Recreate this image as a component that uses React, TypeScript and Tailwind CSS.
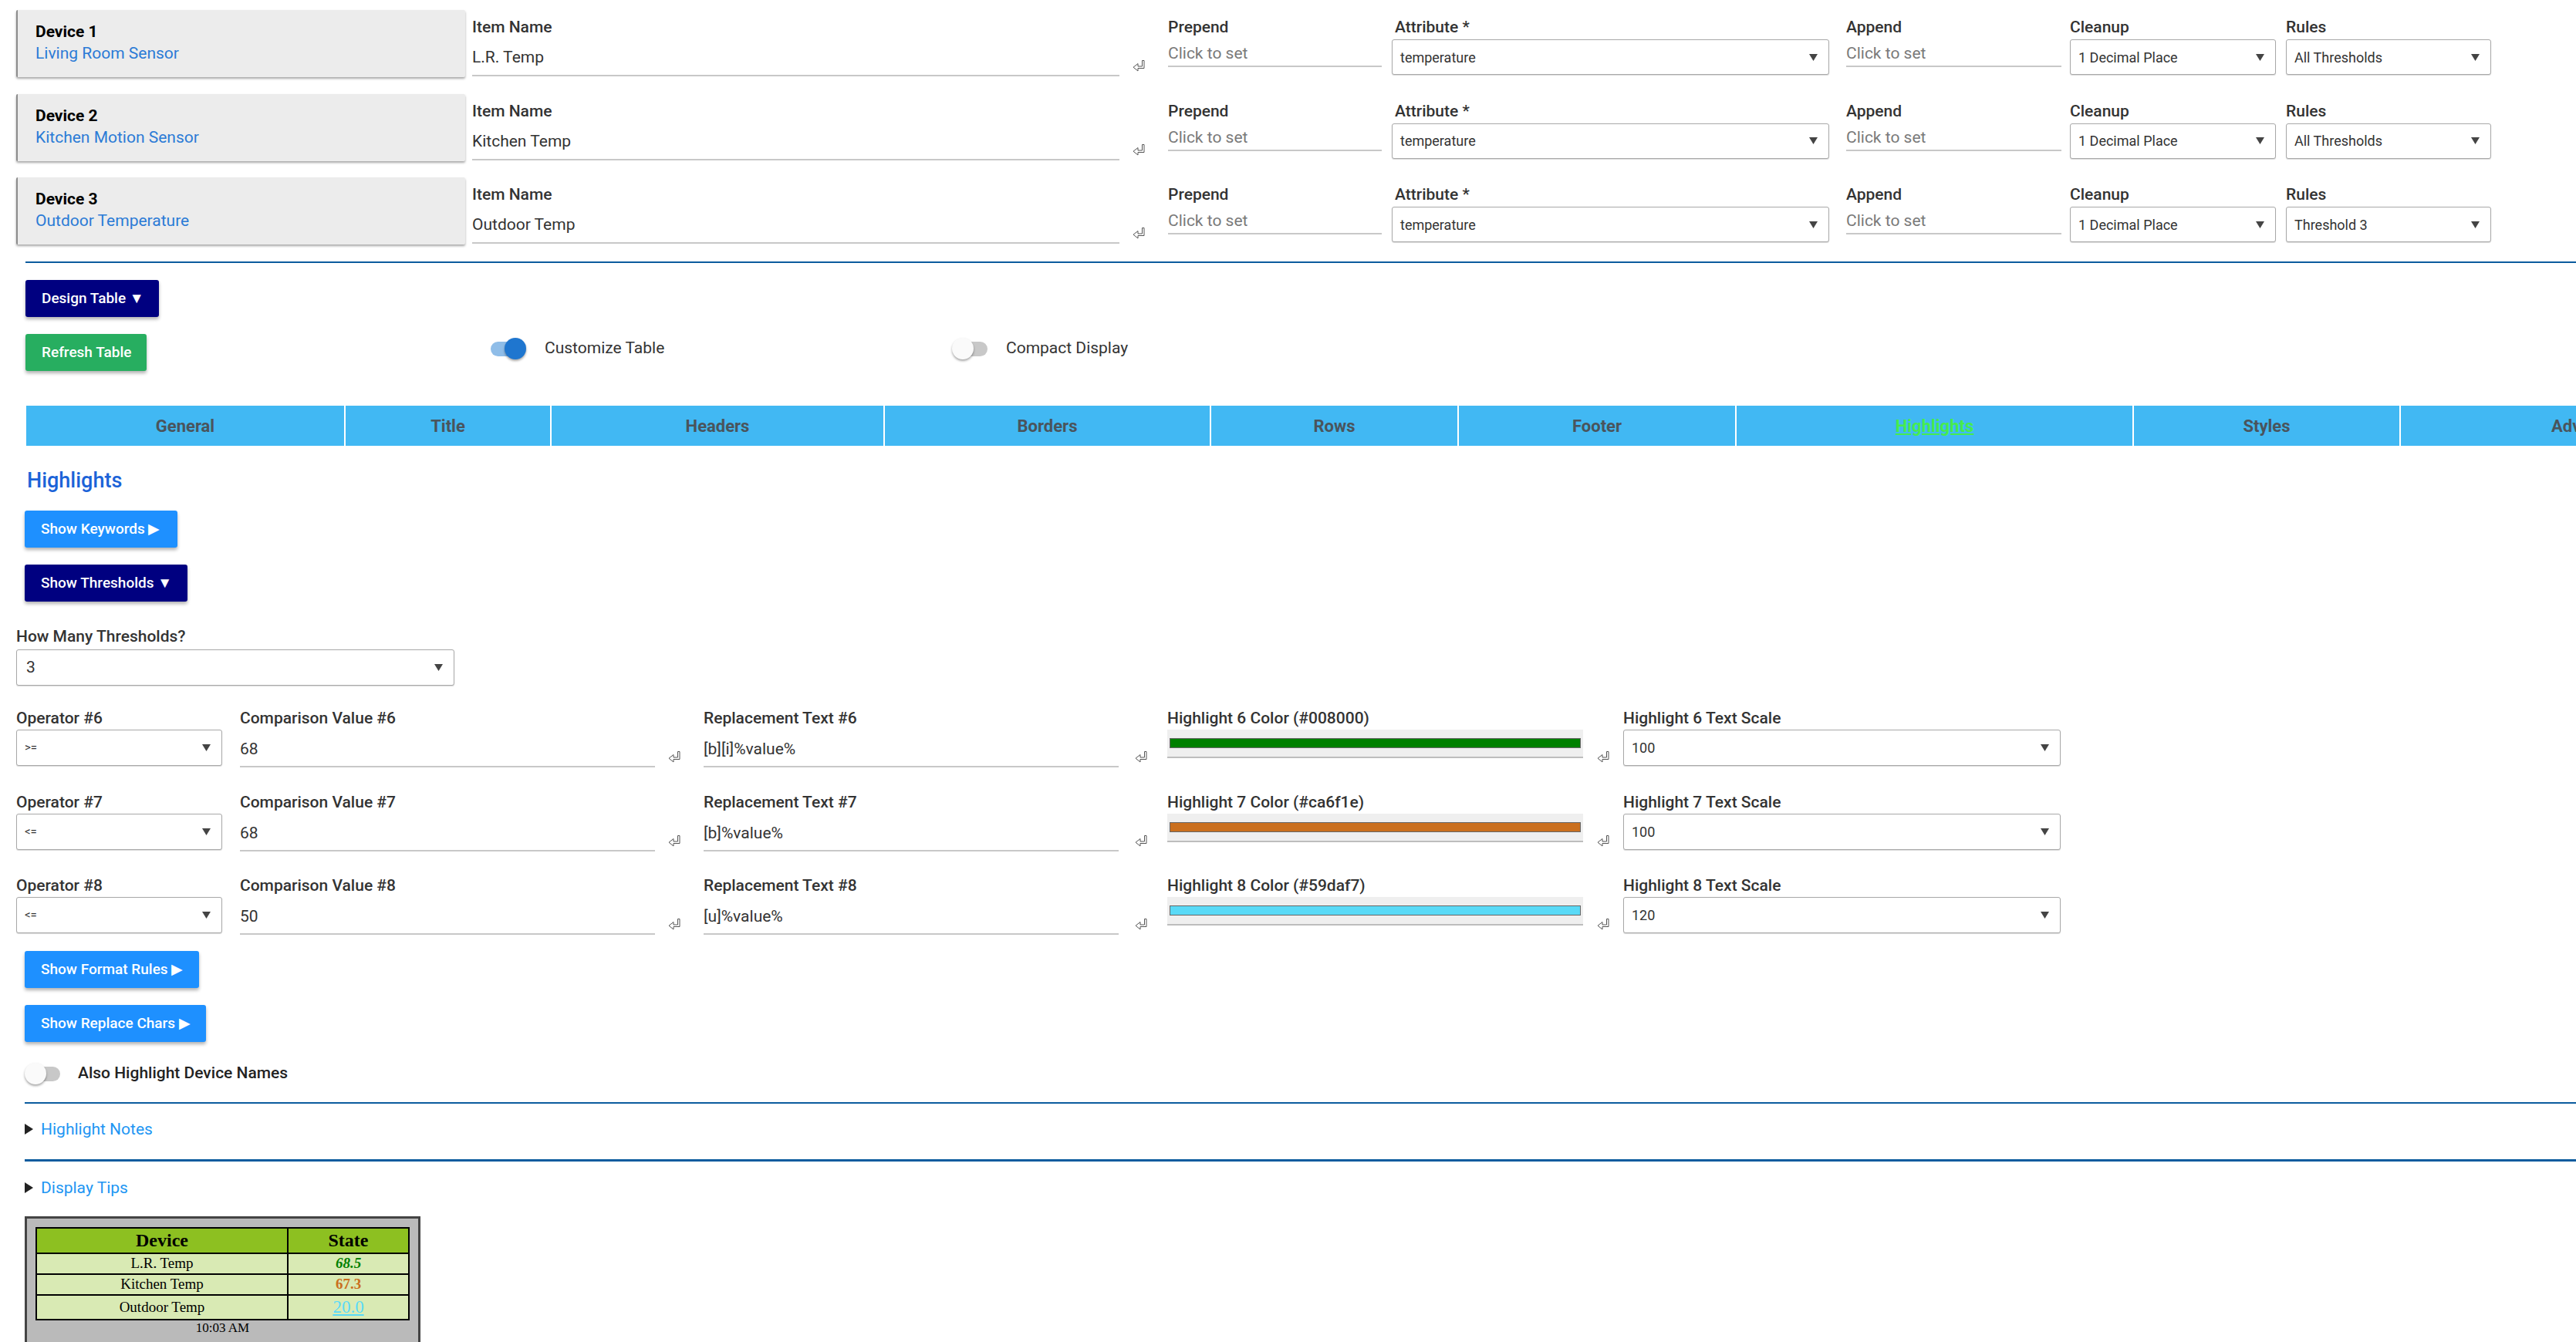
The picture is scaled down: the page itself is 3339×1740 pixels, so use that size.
import React from 'react'

interface Device {
  n: number
  name: string
  item: string
  rules: string
}

interface Threshold {
  n: number
  op: string
  val: string
  rep: string
  color: string
  scale: string
}

const DEVICES: Device[] = [
  { n: 1, name: 'Living Room Sensor', item: 'L.R. Temp', rules: 'All Thresholds' },
  { n: 2, name: 'Kitchen Motion Sensor', item: 'Kitchen Temp', rules: 'All Thresholds' },
  { n: 3, name: 'Outdoor Temperature', item: 'Outdoor Temp', rules: 'Threshold 3' },
]

const THRESHOLDS: Threshold[] = [
  { n: 6, op: '>=', val: '68', rep: '[b][i]%value%', color: '#008000', scale: '100' },
  { n: 7, op: '<=', val: '68', rep: '[b]%value%', color: '#ca6f1e', scale: '100' },
  { n: 8, op: '<=', val: '50', rep: '[u]%value%', color: '#59daf7', scale: '120' },
]

// widths include the 2px white divider on the right
const TABS = [
  { label: 'General', w: 'w-[414px]' },
  { label: 'Title', w: 'w-[267px]' },
  { label: 'Headers', w: 'w-[432px]' },
  { label: 'Borders', w: 'w-[423px]' },
  { label: 'Rows', w: 'w-[321px]' },
  { label: 'Footer', w: 'w-[360px]' },
  { label: 'Highlights', w: 'w-[515px]', active: true },
  { label: 'Styles', w: 'w-[346px]' },
  { label: 'Advanced', w: 'w-[490px]' },
]

function RetIcon({ className = '' }: { className?: string }) {
  return (
    <svg width="16" height="15" viewBox="0 0 16 15" className={`shrink-0 ${className}`}>
      <path d="M12.5 0.5 H15 V10.5 H7 V14 L1 9.2 L7 4.5 V8 H12.5 Z" fill="white" stroke="#555" strokeWidth="1" />
    </svg>
  )
}

function Caret() {
  return (
    <svg width="11" height="9" viewBox="0 0 11 9" className="shrink-0">
      <path d="M0 0 H11 L5.5 9 Z" fill="#444" />
    </svg>
  )
}

function Label({ children, className = '' }: { children: React.ReactNode; className?: string }) {
  return (
    <div className={`h-[25px] whitespace-nowrap text-[21px] font-medium leading-[25px] text-[#333] ${className}`}>
      {children}
    </div>
  )
}

function Select({ value, className = '', text = 'text-[18px]' }: { value: string; className?: string; text?: string }) {
  return (
    <div className={`flex items-center justify-between rounded-[3px] border border-[#a8a8a8] bg-white pl-[10px] pr-[14px] shadow-[0_1px_1px_rgba(0,0,0,0.15)] ${className}`}>
      <span className={`${text} whitespace-nowrap text-[#333]`}>{value}</span>
      <Caret />
    </div>
  )
}

function Btn({ children, className = '' }: { children: React.ReactNode; className?: string }) {
  return (
    <div className={`flex h-[48px] items-center self-start rounded-[3px] pl-[21px] text-[19px] font-medium whitespace-nowrap text-white shadow-[0_3px_4px_rgba(0,0,0,0.3)] ${className}`}>
      {children}
    </div>
  )
}

function Toggle({ on }: { on?: boolean }) {
  return (
    <div className="relative h-[28px] w-[48px] shrink-0">
      <div className={`absolute left-[2px] right-[2px] top-[5px] h-[19px] rounded-full ${on ? 'bg-[#8fbde8]' : 'bg-[#c8c8c8]'}`} />
      <div
        className={`absolute top-0 h-[28px] w-[28px] rounded-full shadow-[0_2px_3px_rgba(0,0,0,0.35)] ${on ? 'right-0 bg-[#1f76cf]' : 'left-0 bg-[#fafafa]'}`}
      />
    </div>
  )
}

function Disclosure({ children }: { children: React.ReactNode }) {
  return (
    <div className="ml-[11px] flex h-[25px] items-center gap-[10px]">
      <svg width="11" height="14" viewBox="0 0 11 14">
        <path d="M0 0 L11 7 L0 14 Z" fill="#222" />
      </svg>
      <span className="text-[21px] leading-[25px] text-[#2196f3]">{children}</span>
    </div>
  )
}

function DeviceRow({ d }: { d: Device }) {
  return (
    <div className="flex h-[108.5px] items-start">
      {/* device card */}
      <div className="h-[87px] w-[582px] shrink-0 rounded-[2px] border-l-2 border-[#8c8c8c] bg-[#ececec] pl-[23px] pt-[14px] shadow-[0_2px_3px_rgba(0,0,0,0.35)]">
        <div className="text-[21px] font-bold leading-[28px] text-black">Device {d.n}</div>
        <div className="text-[21px] leading-[28px] text-[#2b7bd6]">{d.name}</div>
      </div>

      <div className="ml-[9px] w-[839px] shrink-0 pt-[10px]">
        <Label>Item Name</Label>
        <div className="h-[51px] border-b-2 border-[#c8c8c8] pt-[14px] text-[21px] leading-[25px] text-[#333]">{d.item}</div>
      </div>
      <RetIcon className="ml-[17px] mt-[65px]" />

      <div className="ml-[30px] w-[277px] shrink-0 pt-[10px]">
        <Label>Prepend</Label>
        <div className="h-[39px] border-b-2 border-[#c8c8c8] pt-[9px] text-[21px] leading-[25px] text-[#7a7a7a]">Click to set</div>
      </div>

      <div className="ml-[13px] w-[567px] shrink-0 pt-[10px]">
        <Label className="pl-[4px]">Attribute *</Label>
        <Select value="temperature" className="mt-[3px] h-[46px]" />
      </div>

      <div className="ml-[22px] w-[279px] shrink-0 pt-[10px]">
        <Label>Append</Label>
        <div className="h-[39px] border-b-2 border-[#c8c8c8] pt-[9px] text-[21px] leading-[25px] text-[#7a7a7a]">Click to set</div>
      </div>

      <div className="ml-[11px] w-[267px] shrink-0 pt-[10px]">
        <Label>Cleanup</Label>
        <Select value="1 Decimal Place" className="mt-[3px] h-[46px]" />
      </div>

      <div className="ml-[13px] w-[266px] shrink-0 pt-[10px]">
        <Label>Rules</Label>
        <Select value={d.rules} className="mt-[3px] h-[46px]" />
      </div>
    </div>
  )
}

function ThresholdRow({ t }: { t: Threshold }) {
  return (
    <div className="flex items-start">
      <div className="w-[267px] shrink-0">
        <Label>Operator #{t.n}</Label>
        <Select value={t.op} text="text-[15px]" className="mt-[2px] h-[47px]" />
      </div>

      <div className="ml-[23px] w-[538px] shrink-0">
        <Label>Comparison Value #{t.n}</Label>
        <div className="h-[51px] border-b-2 border-[#c8c8c8] pt-[15px] text-[21px] leading-[25px] text-[#333]">{t.val}</div>
      </div>
      <RetIcon className="ml-[17px] mt-[55px]" />

      <div className="ml-[30px] w-[538px] shrink-0">
        <Label>Replacement Text #{t.n}</Label>
        <div className="h-[51px] border-b-2 border-[#c8c8c8] pt-[15px] text-[21px] leading-[25px] text-[#333]">{t.rep}</div>
      </div>
      <RetIcon className="ml-[21px] mt-[55px]" />

      <div className="ml-[26px] w-[539px] shrink-0">
        <Label>
          Highlight {t.n} Color ({t.color})
        </Label>
        <div className="mt-[2px] h-[37px] border-b-2 border-[#bdbdbd] bg-[#efefef] px-[3px] pt-[11px]">
          <div className="h-[13px] border border-[#666]" style={{ backgroundColor: t.color }} />
        </div>
      </div>
      <RetIcon className="ml-[18px] mt-[55px]" />

      <div className="ml-[18px] w-[567px] shrink-0">
        <Label>Highlight {t.n} Text Scale</Label>
        <Select value={t.scale} className="mt-[2px] h-[47px]" />
      </div>
    </div>
  )
}

export default function App() {
  return (
    <div className="h-screen w-full overflow-hidden bg-white pl-[21px] pt-[13px] font-[Roboto,sans-serif] text-[#333]">
      {/* device rows */}
      {DEVICES.map(d => (
        <DeviceRow key={d.n} d={d} />
      ))}

      <div className="ml-[12px] mt-[0.5px] h-[2px] bg-[#0b5c9e]" />

      <div className="flex flex-col">
        <Btn className="ml-[12px] mt-[22px] w-[173px] bg-[#000080]">Design Table ▼</Btn>

        <div className="ml-[12px] mt-[22px] flex items-start">
          <Btn className="w-[157px] bg-[#27ae60]">Refresh Table</Btn>
          <div className="ml-[444px] mt-[3px] flex w-[600px] items-center gap-[24px]">
            <Toggle on />
            <span className="text-[21px] text-[#333]">Customize Table</span>
          </div>
          <div className="mt-[3px] flex items-center gap-[22px]">
            <Toggle />
            <span className="text-[21px] text-[#333]">Compact Display</span>
          </div>
        </div>
      </div>

      {/* tab bar */}
      <div className="ml-[13px] mt-[45px] flex h-[52px]">
        {TABS.map(t => (
          <div
            key={t.label}
            className={`flex h-full shrink-0 items-center justify-center border-r-2 border-white bg-[#41b8f3] text-[22px] font-bold ${t.w} ${t.active ? 'text-[#46ec4e] underline' : 'text-[#4a545c]'}`}
          >
            {t.label}
          </div>
        ))}
      </div>

      <div className="flex flex-col">
        <div className="ml-[14px] mt-[29px] text-[27px] font-medium leading-[32px] text-[#1b63d8]">Highlights</div>

        <Btn className="ml-[11px] mt-[23px] w-[198px] bg-[#1e90ff]">Show Keywords ▶</Btn>
        <Btn className="ml-[11px] mt-[22px] w-[211px] bg-[#000080]">Show Thresholds ▼</Btn>

        <Label className="mt-[33px]">How Many Thresholds?</Label>
        <Select value="3" text="text-[21px]" className="mt-[4px] h-[47px] w-[568px] pl-[12px]" />

        <div className="mt-[30px] flex flex-col gap-[32.5px]">
          {THRESHOLDS.map(t => (
            <ThresholdRow key={t.n} t={t} />
          ))}
        </div>

        <Btn className="ml-[11px] mt-[21px] w-[226px] bg-[#1e90ff]">Show Format Rules ▶</Btn>
        <Btn className="ml-[11px] mt-[22px] w-[235px] bg-[#1e90ff]">Show Replace Chars ▶</Btn>

        <div className="ml-[11px] mt-[25px] flex items-center gap-[21px]">
          <Toggle />
          <span className="text-[21px] font-medium text-[#222]">Also Highlight Device Names</span>
        </div>

        <div className="ml-[11px] mt-[21px] h-[2px] bg-[#0b5c9e]" />
        <div className="mt-[21px]">
          <Disclosure>Highlight Notes</Disclosure>
        </div>
        <div className="ml-[11px] mt-[26px] h-[3px] bg-[#0b5c9e]" />
        <div className="mt-[22px]">
          <Disclosure>Display Tips</Disclosure>
        </div>

        {/* table preview */}
        <div className="ml-[11px] mt-[24px] w-[513px] border-[3px] border-[#444] bg-[#bababa] px-[11px] pb-[30px] pt-[11px] font-['Liberation_Serif',serif] text-black">
          <table className="w-full border-collapse border-2 border-black text-center">
            <thead>
              <tr className="h-[33px] bg-[#8dc021]">
                <th className="w-[326px] border-2 border-black text-[24px] font-bold leading-[28px]">Device</th>
                <th className="border-2 border-black text-[24px] font-bold leading-[28px]">State</th>
              </tr>
            </thead>
            <tbody className="bg-[#d9eab4] text-[19px]">
              <tr className="h-[27px]">
                <td className="border-2 border-black leading-[22px]">L.R. Temp</td>
                <td className="border-2 border-black font-bold italic leading-[22px] text-[#008000]">68.5</td>
              </tr>
              <tr className="h-[27px]">
                <td className="border-2 border-black leading-[22px]">Kitchen Temp</td>
                <td className="border-2 border-black font-bold leading-[22px] text-[#ca6f1e]">67.3</td>
              </tr>
              <tr className="h-[32px]">
                <td className="border-2 border-black leading-[22px]">Outdoor Temp</td>
                <td className="border-2 border-black text-[23px] leading-[27px] text-[#59daf7] underline">20.0</td>
              </tr>
            </tbody>
          </table>
          <div className="text-center text-[17px] leading-[20px]">10:03 AM</div>
        </div>
      </div>
    </div>
  )
}
